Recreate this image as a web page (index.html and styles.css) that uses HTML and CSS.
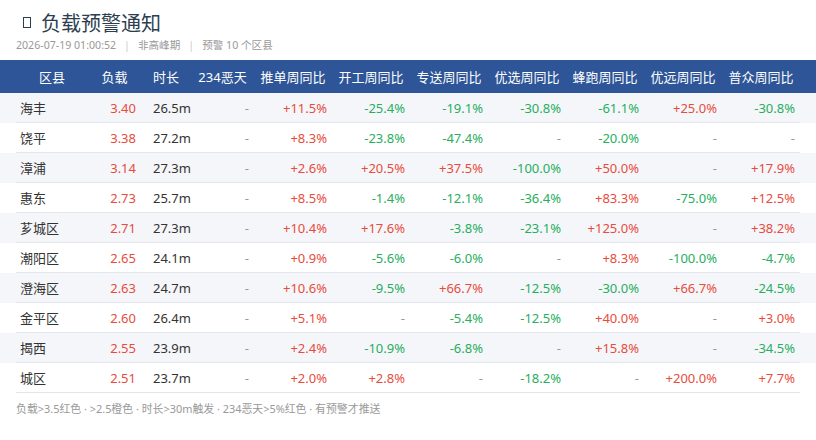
FILE: index.html
```html
<!DOCTYPE html>
<html lang="zh-CN">
<head>
<meta charset="utf-8">
<title>负载预警通知</title>
<link rel="stylesheet" href="styles.css">
</head>
<body>
<div class="page">
  <div class="head">
    <h1 class="title"><span class="icon" aria-hidden="true"></span>负载预警通知</h1>
    <div class="meta">2026-07-19 01:00:52<span class="sep">|</span>非高峰期<span class="sep">|</span>预警 10 个区县</div>
  </div>
  <div class="table">
    <div class="row thead">
      <div class="cells">
        <div>区县</div><div>负载</div><div>时长</div><div>234恶天</div><div>推单周同比</div><div>开工周同比</div><div>专送周同比</div><div>优选周同比</div><div>蜂跑周同比</div><div>优远周同比</div><div>普众周同比</div>
      </div>
    </div>
    <div class="row alt"><div class="cells"><div class="name">海丰</div><div class="load">3.40</div><div class="dur">26.5m</div><div class="na">-</div><div class="up">+11.5%</div><div class="down">-25.4%</div><div class="down">-19.1%</div><div class="down">-30.8%</div><div class="down">-61.1%</div><div class="up">+25.0%</div><div class="down">-30.8%</div></div></div>
    <div class="row"><div class="cells"><div class="name">饶平</div><div class="load">3.38</div><div class="dur">27.2m</div><div class="na">-</div><div class="up">+8.3%</div><div class="down">-23.8%</div><div class="down">-47.4%</div><div class="na">-</div><div class="down">-20.0%</div><div class="na">-</div><div class="na">-</div></div></div>
    <div class="row alt"><div class="cells"><div class="name">漳浦</div><div class="load">3.14</div><div class="dur">27.3m</div><div class="na">-</div><div class="up">+2.6%</div><div class="up">+20.5%</div><div class="up">+37.5%</div><div class="down">-100.0%</div><div class="up">+50.0%</div><div class="na">-</div><div class="up">+17.9%</div></div></div>
    <div class="row"><div class="cells"><div class="name">惠东</div><div class="load">2.73</div><div class="dur">25.7m</div><div class="na">-</div><div class="up">+8.5%</div><div class="down">-1.4%</div><div class="down">-12.1%</div><div class="down">-36.4%</div><div class="up">+83.3%</div><div class="down">-75.0%</div><div class="up">+12.5%</div></div></div>
    <div class="row alt"><div class="cells"><div class="name">芗城区</div><div class="load">2.71</div><div class="dur">27.3m</div><div class="na">-</div><div class="up">+10.4%</div><div class="up">+17.6%</div><div class="down">-3.8%</div><div class="down">-23.1%</div><div class="up">+125.0%</div><div class="na">-</div><div class="up">+38.2%</div></div></div>
    <div class="row"><div class="cells"><div class="name">潮阳区</div><div class="load">2.65</div><div class="dur">24.1m</div><div class="na">-</div><div class="up">+0.9%</div><div class="down">-5.6%</div><div class="down">-6.0%</div><div class="na">-</div><div class="up">+8.3%</div><div class="down">-100.0%</div><div class="down">-4.7%</div></div></div>
    <div class="row alt"><div class="cells"><div class="name">澄海区</div><div class="load">2.63</div><div class="dur">24.7m</div><div class="na">-</div><div class="up">+10.6%</div><div class="down">-9.5%</div><div class="up">+66.7%</div><div class="down">-12.5%</div><div class="down">-30.0%</div><div class="up">+66.7%</div><div class="down">-24.5%</div></div></div>
    <div class="row"><div class="cells"><div class="name">金平区</div><div class="load">2.60</div><div class="dur">26.4m</div><div class="na">-</div><div class="up">+5.1%</div><div class="na">-</div><div class="down">-5.4%</div><div class="down">-12.5%</div><div class="up">+40.0%</div><div class="na">-</div><div class="up">+3.0%</div></div></div>
    <div class="row alt"><div class="cells"><div class="name">揭西</div><div class="load">2.55</div><div class="dur">23.9m</div><div class="na">-</div><div class="up">+2.4%</div><div class="down">-10.9%</div><div class="down">-6.8%</div><div class="na">-</div><div class="up">+15.8%</div><div class="na">-</div><div class="down">-34.5%</div></div></div>
    <div class="row"><div class="cells"><div class="name">城区</div><div class="load">2.51</div><div class="dur">23.7m</div><div class="na">-</div><div class="up">+2.0%</div><div class="up">+2.8%</div><div class="na">-</div><div class="down">-18.2%</div><div class="na">-</div><div class="up">+200.0%</div><div class="up">+7.7%</div></div></div>
  </div>
  <div class="foot">负载&gt;3.5红色 · &gt;2.5橙色 · 时长&gt;30m触发 · 234恶天&gt;5%红色 · 有预警才推送</div>
</div>
</body>
</html>
```

FILE: styles.css
```css
* { box-sizing: border-box; }
html, body { margin: 0; padding: 0; background: #fff; }
body {
  font-family: "Noto Sans", "Noto Sans CJK SC", sans-serif;
  color: #333;
  width: 816px;
  height: 440px;
  overflow: hidden;
}
.head {
  padding: 11px 16px 0;
  height: 60px;
}
.title {
  margin: 0;
  font-size: 20px;
  line-height: 26px;
  font-weight: 400;
  color: #2c3e50;
}
.icon {
  display: inline-block;
  width: 8px;
  height: 11px;
  border: 1px solid #2c3e50;
  margin: 0 10px 0 7px;
  vertical-align: 3px;
}
.meta {
  font-size: 10.6px;
  line-height: 16px;
  color: #999;
}
.sep { color: #ccc; margin: 0 8px; }
.row { padding: 0 16px; }
.row.alt { background: #f5f6fa; }
.cells {
  display: grid;
  grid-template-columns: 72px 53px 50px 63px repeat(7, 78px);
  height: 30px;
  align-items: center;
  border-bottom: 1px solid #e3e6ec;
  font-size: 13px;
  line-height: 18px;
}
.cells > div {
  padding: 0 5px;
  text-align: right;
  white-space: nowrap;
}
.thead { background: #2d5597; }
.thead .cells {
  height: 33px;
  border-bottom: none;
  color: #fff;
}
.thead .cells > div { text-align: center; padding: 0; }
.cells > .name { text-align: left; padding-left: 4px; color: #333; }
.cells > .dur { text-align: left; padding-left: 12px; color: #333; }
.load { color: #e74c3c; }
.up { color: #e74c3c; }
.down { color: #27ae60; }
.na { color: #999; }
.foot {
  padding: 8px 16px 0;
  font-size: 10.9px;
  line-height: 16px;
  color: #999;
}
```
